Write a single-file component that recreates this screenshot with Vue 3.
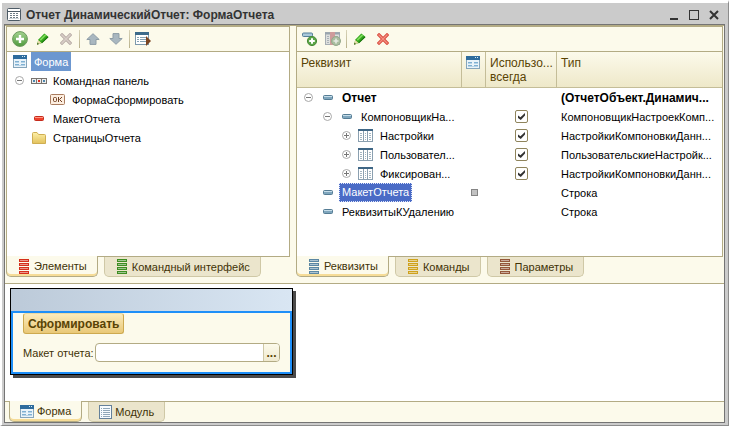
<template>
  <svg class="sprite" aria-hidden="true">
    <defs>
      <linearGradient id="g-green" x1="0" y1="0" x2="0" y2="1">
        <stop offset="0" stop-color="#a5d391" />
        <stop offset="1" stop-color="#4f9a3c" />
      </linearGradient>
      <linearGradient id="g-folder" x1="0" y1="0" x2="0" y2="1">
        <stop offset="0" stop-color="#fdf0a8" />
        <stop offset="1" stop-color="#e2c15c" />
      </linearGradient>
    </defs>

    <symbol id="i-window" viewBox="0 0 14 13">
      <rect x="0.5" y="0.5" width="13" height="12" rx="1" fill="#fff" stroke="#4d5b66" />
      <path d="M1 3.5h12" stroke="#4d5b66" />
      <path d="M3 5.5h8M3 7.5h8M3 9.5h8" stroke="#6f7d86" stroke-dasharray="2 1" />
      <path d="M2 10.5h10" stroke="#cfd6da" />
    </symbol>
    <symbol id="i-form" viewBox="0 0 14 13">
      <rect x="0.5" y="0.5" width="13" height="12" fill="#e9f3fa" stroke="#86a5bb" />
      <rect width="14" height="4" fill="#2f6c9d" />
      <path d="M9 1.5h1M11 1.5h1" stroke="#d8ebf8" />
      <path d="M2 6.5h4M8 6.5h4M2 9.5h4M8 9.5h4" stroke="#7fb0d3" />
      <path d="M2 7.5h4M8 7.5h4M2 10.5h10" stroke="#b7d3e6" />
    </symbol>
    <symbol id="i-add" viewBox="0 0 16 16">
      <circle cx="8" cy="8" r="7.4" fill="url(#g-green)" stroke="#6c9a5e" />
      <path d="M8 4v8M4 8h8" stroke="#fff" stroke-width="2.4" />
    </symbol>
    <symbol id="i-pencil" viewBox="0 0 14 14">
      <path d="M1 12.5 2.4 7.6 8.3 1.5 12.4 4.8 6 11z" fill="#33a51c" />
      <path d="M3.6 7.6 8.8 2.4l1.4 1.1L4.8 8.8z" fill="#7fdd5b" />
      <path d="M5.5 10.5 11.6 4.6l.9.7L6 11.3z" fill="#17700c" />
      <path d="M1 12.7 2.3 8l3.2 3z" fill="#e9dca8" />
      <path d="M1 12.7l.6-2 1.5 1.3z" fill="#29520f" />
    </symbol>
    <symbol id="i-cross-off" viewBox="0 0 12 12">
      <path d="M2 2l8 8M10 2l-8 8" stroke="#b5a9a3" stroke-width="3.2" stroke-linecap="square" />
      <path d="M2 2l8 8M10 2l-8 8" stroke="#d8cdc7" stroke-width="1.6" stroke-linecap="square" />
    </symbol>
    <symbol id="i-cross" viewBox="0 0 12 12">
      <path d="M2 2l8 8M10 2l-8 8" stroke="#d8483b" stroke-width="3.2" stroke-linecap="square" />
      <path d="M2 2l8 8M10 2l-8 8" stroke="#f38f82" stroke-width="1.4" stroke-linecap="square" />
    </symbol>
    <symbol id="i-up" viewBox="0 0 14 12">
      <path d="M7 .7 13.2 6.5H10v4.9H4V6.5H.8z" fill="#a9b7c0" stroke="#8d9ca6" />
    </symbol>
    <symbol id="i-down" viewBox="0 0 14 12">
      <path d="M7 11.3 13.2 5.5H10V.6H4v4.9H.8z" fill="#a9b7c0" stroke="#8d9ca6" />
    </symbol>
    <symbol id="i-list" viewBox="0 0 16 14">
      <rect x="0.5" y="0.5" width="13" height="12" fill="#fff" stroke="#7d99ac" />
      <rect width="14" height="3" fill="#3c6a8a" />
      <path d="M2 5.5h2M2 7.5h2M2 9.5h2M5 5.5h6M5 7.5h6M5 9.5h6" stroke="#86a3b4" />
      <path d="M11 4v10l5-5z" fill="#7c4522" />
    </symbol>
    <symbol id="i-attr-add" viewBox="0 0 16 14">
      <rect x="0.5" y="1" width="10" height="3.5" rx="1" fill="#a9c8da" stroke="#557f99" />
      <circle cx="10" cy="9" r="4.6" fill="#5ca548" stroke="#488b38" />
      <path d="M10 6.2v5.6M7.2 9h5.6" stroke="#fff" stroke-width="2" />
    </symbol>
    <symbol id="i-col-add" viewBox="0 0 16 14">
      <rect x="0.5" y="0.5" width="14" height="12" fill="#dedfdd" stroke="#a5adb3" />
      <path d="M0 1.5h15" stroke="#9aa5ad" stroke-width="2" />
      <rect x="5" y="0" width="5" height="13" fill="#cf9b9b" />
      <path d="M2 4.5h2M2 6.5h2M2 8.5h2M11 4.5h2M2 10.5h2" stroke="#aab2b7" />
      <circle cx="11" cy="9" r="4.5" fill="#a9bd9f" stroke="#96a98c" />
      <path d="M11 6.5v5M8.5 9h5" stroke="#e6eae2" stroke-width="1.6" />
    </symbol>
    <symbol id="i-minus" viewBox="0 0 9 9">
      <circle cx="4.5" cy="4.5" r="4" fill="#fff" stroke="#a9a9a9" />
      <path d="M2 4.5h5" stroke="#777" />
    </symbol>
    <symbol id="i-plus" viewBox="0 0 9 9">
      <circle cx="4.5" cy="4.5" r="4" fill="#fff" stroke="#a9a9a9" />
      <path d="M2 4.5h5M4.5 2v5" stroke="#777" />
    </symbol>
    <symbol id="i-panel" viewBox="0 0 16 6">
      <rect x="0.5" y="0.5" width="15" height="5" fill="#eee" stroke="#77736f" />
      <path d="M5.5 0v6M10.5 0v6" stroke="#77736f" />
      <rect x="2" y="2" width="2" height="2" fill="#4d87ad" />
      <rect x="7" y="2" width="2" height="2" fill="#e03020" />
      <rect x="12" y="2" width="2" height="2" fill="#4d87ad" />
    </symbol>
    <symbol id="i-ok" viewBox="0 0 15 11">
      <rect x="0.5" y="0.5" width="14" height="10" rx="1" fill="#fdeee0" stroke="#a97c5f" />
      <rect x="3.5" y="3.5" width="3" height="4" rx="1" fill="none" stroke="#6f3f22" />
      <path d="M8.5 3v5M12 3 9.5 5.5 12 8" fill="none" stroke="#6f3f22" />
    </symbol>
    <symbol id="i-red" viewBox="0 0 10 5">
      <rect x="0.5" y="0.5" width="9" height="4" rx="1" fill="#f0402c" stroke="#c42a1c" />
      <path d="M1 1.5h8" stroke="#ff9a85" />
    </symbol>
    <symbol id="i-attr" viewBox="0 0 10 5">
      <rect x="0.5" y="0.5" width="9" height="4" rx="1" fill="#7fa6bd" stroke="#557c94" />
      <path d="M1 1.5h8" stroke="#c6dde9" />
    </symbol>
    <symbol id="i-folder" viewBox="0 0 14 12">
      <path d="M.5 11.5v-10q0-1 1-1h3.5l1.5 2h6q1 0 1 1v8z" fill="url(#g-folder)" stroke="#cfae52" />
    </symbol>
    <symbol id="i-table" viewBox="0 0 15 13">
      <rect x="0.5" y="0.5" width="14" height="12" fill="#fff" stroke="#8ba0b0" />
      <rect width="15" height="2" fill="#3f6685" />
      <path d="M5.5 2v11M9.5 2v11" stroke="#8ba0b0" />
      <path d="M2 4.5h2M2 6.5h2M2 8.5h2M2 10.5h2M7 4.5h1M7 6.5h1M7 8.5h1M7 10.5h1M11 4.5h2M11 6.5h2M11 8.5h2M11 10.5h2" stroke="#a3b5c1" />
    </symbol>
    <symbol id="i-stack" viewBox="0 0 10 15">
      <path d="M0 1.5h10M0 5.5h10M0 9.5h10M0 13.5h10" stroke="currentColor" stroke-width="3" />
      <path d="M1 1.5h8M1 5.5h8M1 9.5h8M1 13.5h8" stroke="#fff" stroke-opacity="0.5" />
    </symbol>
    <symbol id="i-module" viewBox="0 0 13 14">
      <rect x="0.5" y="0.5" width="12" height="13" fill="#f7fbfe" stroke="#64809a" />
      <path d="M2 3.5h1M2 5.5h1M2 7.5h1M2 9.5h1M2 11.5h1M4 3.5h7M4 5.5h7M4 7.5h7M4 9.5h7M4 11.5h7" stroke="#8fa6b8" />
    </symbol>
  </svg>

  <main class="window">
    <header class="title-bar">
      <svg class="title-icon"><use href="#i-window" /></svg>
      <h1>Отчет ДинамическийОтчет: ФормаОтчета</h1>
      <button class="win-btn" aria-label="Свернуть">
        <svg viewBox="0 0 12 12"><path d="M2 10h8" stroke="#333" stroke-width="2" /></svg>
      </button>
      <button class="win-btn" aria-label="Развернуть">
        <svg viewBox="0 0 12 12"><path d="M1 1.5h10M1.5 1v10M10.5 1v10M1 10.5h10" stroke="#333" /></svg>
      </button>
      <button class="win-btn" aria-label="Закрыть">
        <svg viewBox="0 0 12 12"><path d="M2 2l8 8M10 2l-8 8" stroke="#333" stroke-width="2" /></svg>
      </button>
    </header>

    <div class="content">
      <div class="panes">
        <section class="group">
          <div class="pane">
            <div class="toolbar">
              <template v-for="(b, i) in leftTools" :key="i">
                <span v-if="b.sep" class="sep"></span>
                <button v-else :aria-label="b.label" :disabled="b.disabled">
                  <svg :width="b.w" :height="b.h"><use :href="'#i-' + b.icon" /></svg>
                </button>
              </template>
            </div>
            <ul class="tree">
              <li v-for="item in elements" :key="item.name" class="node">
                <span v-for="(s, i) in item.slots" :key="i" class="slot">
                  <svg v-if="s" :width="icons[s][0]" :height="icons[s][1]"><use :href="'#i-' + s" /></svg>
                </span>
                <span :class="['node-label', { current: item.current }]">{{ item.name }}</span>
              </li>
            </ul>
          </div>
          <nav class="tabs">
            <button v-for="t in leftTabs" :key="t.name" :class="['tab', { active: t.active }]">
              <svg :class="['stack', t.color]"><use href="#i-stack" /></svg>{{ t.name }}
            </button>
          </nav>
        </section>

        <section class="group">
          <div class="pane">
            <div class="toolbar">
              <template v-for="(b, i) in rightTools" :key="i">
                <span v-if="b.sep" class="sep"></span>
                <button v-else :aria-label="b.label" :disabled="b.disabled">
                  <svg :width="b.w" :height="b.h"><use :href="'#i-' + b.icon" /></svg>
                </button>
              </template>
            </div>
            <table class="attrs">
              <colgroup>
                <col class="c-name" />
                <col class="c-form" />
                <col class="c-use" />
                <col />
              </colgroup>
              <thead>
                <tr>
                  <th>Реквизит</th>
                  <th class="icon-cell"><svg width="14" height="13"><use href="#i-form" /></svg></th>
                  <th>Использо... всегда</th>
                  <th>Тип</th>
                </tr>
              </thead>
              <tbody>
                <tr v-for="row in attrs" :key="row.name" :class="{ bold: row.bold }">
                  <td>
                    <div class="node">
                      <span v-for="(s, i) in row.slots" :key="i" class="slot">
                        <svg v-if="s" :width="icons[s][0]" :height="icons[s][1]"><use :href="'#i-' + s" /></svg>
                      </span>
                      <span :class="['node-label', { selected: row.selected }]">{{ row.name }}</span>
                    </div>
                  </td>
                  <td class="center"><span v-if="row.selected" class="mark"></span></td>
                  <td class="center">
                    <input v-if="row.check" v-model="row.used" type="checkbox" :aria-label="row.name" />
                  </td>
                  <td class="type">{{ row.type }}</td>
                </tr>
              </tbody>
            </table>
          </div>
          <nav class="tabs">
            <button v-for="t in rightTabs" :key="t.name" :class="['tab', { active: t.active }]">
              <svg :class="['stack', t.color]"><use href="#i-stack" /></svg>{{ t.name }}
            </button>
          </nav>
        </section>
      </div>

      <section class="canvas">
        <form class="preview" @submit.prevent>
          <div class="preview-head"></div>
          <div class="preview-body">
            <button class="run">Сформировать</button>
            <div class="field">
              <label for="layout">Макет отчета:</label>
              <div class="picker">
                <input id="layout" v-model="layout" type="text" />
                <button type="button" aria-label="Выбрать">...</button>
              </div>
            </div>
          </div>
        </form>
      </section>

      <nav class="tabs page-tabs">
        <button class="tab active">
          <svg width="14" height="13"><use href="#i-form" /></svg>Форма
        </button>
        <button class="tab">
          <svg width="13" height="14"><use href="#i-module" /></svg>Модуль
        </button>
      </nav>
    </div>
  </main>
</template>

<script setup>
import { ref } from "vue";

const layout = ref("");

// icon sizes in tree rows: [width, height]
const icons = {
  form: [14, 13],
  minus: [9, 9],
  plus: [9, 9],
  panel: [16, 6],
  ok: [15, 11],
  red: [10, 5],
  attr: [10, 5],
  folder: [14, 12],
  table: [15, 13],
};

const leftTools = [
  { icon: "add", w: 16, h: 16, label: "Добавить" },
  { icon: "pencil", w: 14, h: 14, label: "Изменить" },
  { icon: "cross-off", w: 12, h: 12, label: "Удалить", disabled: true },
  { sep: true },
  { icon: "up", w: 14, h: 12, label: "Вверх", disabled: true },
  { icon: "down", w: 14, h: 12, label: "Вниз", disabled: true },
  { sep: true },
  { icon: "list", w: 16, h: 14, label: "Проверка" },
];

const rightTools = [
  { icon: "attr-add", w: 16, h: 14, label: "Добавить реквизит" },
  { icon: "col-add", w: 16, h: 14, label: "Добавить колонку", disabled: true },
  { sep: true },
  { icon: "pencil", w: 14, h: 14, label: "Изменить" },
  { icon: "cross", w: 12, h: 12, label: "Удалить" },
];

const elements = [
  { name: "Форма", slots: ["form"], current: true },
  { name: "Командная панель", slots: ["minus", "panel"] },
  { name: "ФормаСформировать", slots: ["", "", "ok"] },
  { name: "МакетОтчета", slots: ["", "red"] },
  { name: "СтраницыОтчета", slots: ["", "folder"] },
];

const attrs = ref([
  { name: "Отчет", slots: ["minus", "attr"], type: "(ОтчетОбъект.Динамич...", bold: true },
  { name: "КомпоновщикНа...", slots: ["", "minus", "attr"], type: "КомпоновщикНастроекКомп...", check: true, used: true },
  { name: "Настройки", slots: ["", "", "plus", "table"], type: "НастройкиКомпоновкиДанн...", check: true, used: true },
  { name: "Пользовател...", slots: ["", "", "plus", "table"], type: "ПользовательскиеНастройк...", check: true, used: true },
  { name: "Фиксирован...", slots: ["", "", "plus", "table"], type: "НастройкиКомпоновкиДанн...", check: true, used: true },
  { name: "МакетОтчета", slots: ["", "attr"], type: "Строка", selected: true },
  { name: "РеквизитыКУдалению", slots: ["", "attr"], type: "Строка" },
]);

const leftTabs = [
  { name: "Элементы", color: "red", active: true },
  { name: "Командный интерфейс", color: "green" },
];

const rightTabs = [
  { name: "Реквизиты", color: "blue", active: true },
  { name: "Команды", color: "yellow" },
  { name: "Параметры", color: "brown" },
];
</script>

<style>
body {
  margin: 0;
  background: #fff;
}
</style>

<style scoped>
* {
  box-sizing: border-box;
}

button,
input {
  font: inherit;
  color: inherit;
  margin: 0;
}

button {
  padding: 0;
  border: 0;
  background: none;
}

svg {
  display: block;
  flex: none;
}

.sprite {
  position: absolute;
  width: 0;
  height: 0;
}

/* window frame */
.window {
  display: flex;
  flex-direction: column;
  min-height: 100vh;
  padding: 0 3px 2px 2px;
  border: 1px solid #8c8c8c;
  border-top: 3px solid #fff;
  border-left: 2px solid #fff;
  margin-right: 2px;
  background: #cbcbcb;
  font-family: "Liberation Sans", Arial, sans-serif;
  font-size: 11px;
  line-height: 14px;
  color: #000;
}

.title-bar {
  display: flex;
  align-items: center;
  height: 21px;
  padding: 2px 1px 0 3px;
}

.title-icon {
  width: 14px;
  height: 13px;
}

h1 {
  flex: 1;
  margin: 0 0 0 5px;
  font-size: 12px;
  font-weight: bold;
  color: #333;
  white-space: nowrap;
}

.win-btn {
  display: flex;
  justify-content: center;
  width: 20px;
}

.win-btn svg {
  width: 12px;
  height: 12px;
}

.content {
  flex: 1;
  display: flex;
  flex-direction: column;
  border: 1px solid #747474;
  background: #fcfaeb;
}

/* upper panes */
.panes {
  display: grid;
  grid-template-columns: 284fr 427fr;
  gap: 6px;
  padding: 0 1px 6px;
  border-top: 1px solid #b3ab84;
  border-bottom: 1px solid #b3ab84;
}

.group {
  display: flex;
  flex-direction: column;
  min-width: 0;
}

.pane {
  flex: 1;
  min-height: 231px;
  border: 1px solid #b3ab84;
  background: #fff;
}

.toolbar {
  display: flex;
  align-items: center;
  height: 25px;
  padding-left: 1px;
  border-bottom: 1px solid #b3ab84;
  background: #fcfaeb;
}

.toolbar button {
  display: flex;
  align-items: center;
  justify-content: center;
  width: 23px;
  height: 23px;
}

.sep {
  width: 4px;
  height: 18px;
  background: linear-gradient(#d8d3b8, #b9b28c) center / 1px 100% no-repeat;
}

/* trees */
.tree {
  margin: 0;
  padding: 0 0 0 3px;
  list-style: none;
}

.node {
  display: flex;
  align-items: center;
  height: 19px;
  white-space: nowrap;
}

.slot {
  display: flex;
  flex: none;
  align-items: center;
  justify-content: center;
  width: 19px;
}

.node-label {
  margin-left: 2px;
  padding: 1px 3px 0;
  line-height: 18px;
}

.node-label.current {
  background: #6c97d0;
  color: #fff;
}

.node-label.selected {
  padding: 0 2px;
  border: 1px dotted #e0e6fa;
  background: #4a6bc6;
  color: #fff;
  line-height: 17px;
}

/* attributes table */
.attrs {
  width: 100%;
  table-layout: fixed;
  border-collapse: separate;
  border-spacing: 0;
}

.c-name {
  width: 165px;
}

.c-form {
  width: 24px;
}

.c-use {
  width: 71px;
}

th {
  height: 36px;
  padding: 4px 4px 2px;
  border-right: 1px solid #c4bd98;
  border-bottom: 1px solid #c4bd98;
  background: linear-gradient(#fcfaeb, #eee8c9);
  color: #594304;
  font-size: 12px;
  font-weight: normal;
  text-align: left;
  vertical-align: top;
}

th:last-child {
  border-right: 0;
}

.icon-cell {
  padding: 4px;
}

td {
  height: 19px;
  padding: 0 0 0 2px;
  overflow: hidden;
  white-space: nowrap;
}

td.center {
  padding: 0;
}

td.type {
  padding-left: 4px;
}

.bold {
  font-size: 12px;
  font-weight: bold;
}

.mark {
  display: block;
  width: 7px;
  height: 7px;
  margin: 0 auto;
  border: 1px solid #858585;
  background: #c2c2c2;
}

.center input {
  display: block;
  width: 13px;
  height: 13px;
  margin: 0 auto;
  appearance: none;
  border: 1px solid #8f845c;
  border-radius: 2px;
  background: #fff;
}

.center input:checked::before {
  content: "";
  display: block;
  width: 7px;
  height: 7px;
  margin: 2px;
  background: #333;
  clip-path: polygon(0 35%, 35% 60%, 100% 0, 100% 35%, 40% 100%, 0 70%);
}

/* tabs */
.tabs {
  display: flex;
  gap: 6px;
  height: 20px;
}

.tab {
  display: flex;
  align-items: center;
  gap: 5px;
  height: 20px;
  padding: 0 10px 0 12px;
  border: 1px solid #cfc8a6;
  border-top: 0;
  border-radius: 0 0 5px 5px;
  background: #ebe5cc;
  color: #3f3206;
  white-space: nowrap;
}

.tab.active {
  height: 21px;
  margin-top: -1px;
  border-color: #b3ab84;
  background: #fcfaeb;
  box-shadow: inset 0 -2px #f6dc97;
}

.stack {
  width: 10px;
  height: 15px;
}

.red {
  color: #d52f1b;
}

.green {
  color: #3d8d22;
}

.blue {
  color: #5b87a3;
}

.yellow {
  color: #cfa21c;
}

.brown {
  color: #94573a;
}

/* form preview */
.canvas {
  flex: 1;
  padding: 4px 5px;
  border-bottom: 1px solid #b3ab84;
  background: #fff;
}

.preview {
  width: 283px;
  border: 1px solid #000;
  box-shadow: 3px 3px #4a4a4a;
}

.preview-head {
  height: 22px;
  background: linear-gradient(90deg, #bccad9, #d9e6f3);
}

.preview-body {
  padding: 0 10px 10px;
  border: 2px solid #1e8ff8;
  background: #fcfaeb;
}

.run {
  display: block;
  height: 21px;
  padding: 0 4px;
  border: 1px solid #cda94f;
  border-top-color: #ecd9a2;
  border-radius: 3px;
  background: linear-gradient(#fbebbb, #e9c878);
  color: #594304;
  font-size: 12px;
  font-weight: bold;
}

.field {
  display: flex;
  align-items: center;
  margin-top: 9px;
  color: #3f3206;
}

.picker {
  display: flex;
  flex: 1;
  height: 19px;
  margin-left: 1px;
  overflow: hidden;
  border: 1px solid #b3ab84;
  border-radius: 4px;
  background: #fff;
}

.picker input {
  flex: 1;
  min-width: 0;
  padding: 0 3px;
  border: 0;
  outline: 0;
  background: none;
}

.picker button {
  width: 16px;
  border-left: 1px solid #cfc8a6;
  background: linear-gradient(#fcfaeb, #efe9cf);
  color: #594304;
  font-size: 12px;
  font-weight: bold;
}

.page-tabs {
  padding-left: 4px;
}

.page-tabs .tab {
  gap: 3px;
  padding: 0 10px;
}
</style>
